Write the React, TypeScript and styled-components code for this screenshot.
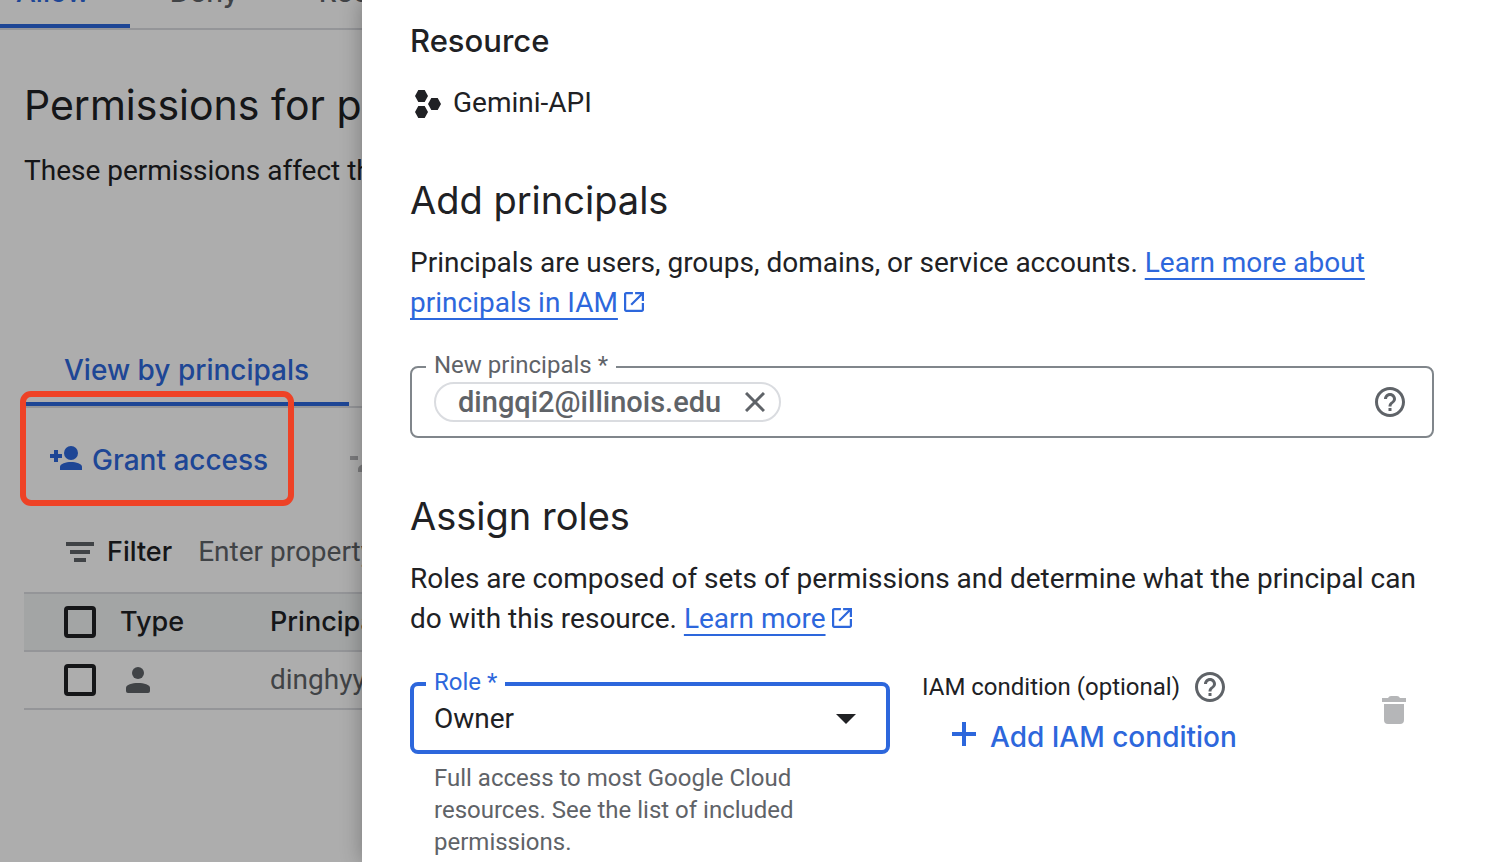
import React, { useState } from "react";
import styled, { createGlobalStyle, css } from "styled-components";

const color = {
  text: "#202124",
  muted: "#5f6368",
  blue: "#2d67dc",
  outline: "#80868b",
  divider: "#dadce0",
  disabled: "#b5b6b8",
  frame: "#ee4226",
};

const body = `Roboto, "Liberation Sans", sans-serif`;
const display = `Inter, Roboto, sans-serif`;

const GlobalStyle = createGlobalStyle`
  *, *::before, *::after { box-sizing: border-box; }
  body { margin: 0; background: #fff; color: ${color.text}; font: 400 28px/40px ${body}; }
  h1, h2, h3, p { margin: 0; }
  button, input, select { font: inherit; color: inherit; }
  svg { display: block; flex: none; }
`;

const Screen = styled.div`
  display: flex;
  min-height: 100vh;
`;

/* Page behind the drawer */

const Page = styled.main`
  position: relative;
  flex: 0 0 362px;
  padding-left: 24px;
  overflow: hidden;
  white-space: nowrap;
  background: #fff;
`;

const Scrim = styled.div`
  position: absolute;
  inset: 0;
  background: rgba(0, 0, 0, 0.32);
  pointer-events: none;
`;

const TabBar = styled.nav<{ $scrolled?: boolean }>`
  display: flex;
  width: max-content;
  min-width: 100%;
  border-bottom: 2px solid ${color.divider};
  ${(p) =>
    p.$scrolled &&
    css`
      margin: -28px 0 0 -48px;
    `}
`;

const Tab = styled.button<{ $active?: boolean }>`
  padding: 0 40px 12px;
  border: 0;
  border-bottom: 4px solid ${(p) => (p.$active ? color.blue : "transparent")};
  background: none;
  color: ${(p) => (p.$active ? color.blue : color.muted)};
  font-family: ${display};
  font-weight: 500;
`;

const PageTitle = styled.h1`
  margin-top: 47px;
  font: 400 41px/56px ${display};
`;

const PageText = styled.p`
  margin: 18px 0 159px;
`;

const Toolbar = styled.div`
  display: flex;
  align-items: center;
  gap: 82px;
  height: 104px;
  padding-left: 26px;
`;

const ToolButton = styled.button`
  display: flex;
  align-items: center;
  gap: 10px;
  padding: 0;
  border: 0;
  background: none;
  color: ${color.blue};
  font-family: ${display};
  font-weight: 500;

  &:disabled {
    color: ${color.disabled};
  }
`;

const Highlight = styled.div`
  position: absolute;
  top: 391px;
  left: 20px;
  width: 274px;
  height: 115px;
  border: 6px solid ${color.frame};
  border-radius: 11px;
  pointer-events: none;
`;

const FilterBar = styled.div`
  display: flex;
  align-items: center;
  height: 80px;
  padding-left: 42px;
  color: ${color.muted};
`;

const FilterLabel = styled.label`
  margin: 0 26px 0 13px;
  color: ${color.text};
  font-family: ${display};
  font-size: 27px;
  font-weight: 500;
`;

const FilterInput = styled.input`
  width: 440px;
  padding: 0;
  border: 0;
  outline: 0;
  background: none;

  &::placeholder {
    color: ${color.muted};
    opacity: 1;
  }
`;

const Table = styled.table`
  width: 640px;
  table-layout: fixed;
  border-collapse: separate;
  border-spacing: 0;
  border-top: 2px solid ${color.divider};

  th,
  td {
    height: 58px;
    padding: 0;
    border-bottom: 2px solid ${color.divider};
    text-align: left;
    color: ${color.muted};
  }
  th {
    background: #f1f3f4;
    color: ${color.text};
    font-family: ${display};
    font-size: 27px;
    font-weight: 500;
  }
`;

const CheckCol = styled.col`
  width: 96px;
`;
const TypeCol = styled.col`
  width: 150px;
`;

const Checkbox = styled.input`
  display: block;
  appearance: none;
  width: 32px;
  height: 32px;
  margin: 0 0 0 40px;
  border: 4px solid ${color.text};
  border-radius: 4px;
`;

const TypeIcon = styled.span`
  display: block;
  padding-left: 6px;
`;

/* Drawer */

const Drawer = styled.aside`
  position: relative;
  flex: 1;
  min-width: 0;
  padding: 21px 64px 4px 48px;
  background: #fff;
  box-shadow: 0 0 20px rgba(0, 0, 0, 0.3);
`;

const ResourceTitle = styled.h3`
  font: 500 31px/40px ${display};
`;

const ResourceName = styled.div`
  display: flex;
  align-items: center;
  gap: 12px;
  margin-top: 22px;
  padding-left: 5px;
`;

const SectionTitle = styled.h2`
  margin: 53px 0 19px;
  font: 400 38px/48px ${display};
`;

const Link = styled.a`
  color: ${color.blue};
  text-decoration: underline;
  text-decoration-thickness: 2px;
  text-underline-offset: 6px;
  text-decoration-skip-ink: none;
`;

const ExternalMark = styled.span`
  display: inline-block;
  margin-left: 6px;
  color: ${color.blue};
`;

const Outline = styled.fieldset<{ $focused?: boolean }>`
  min-width: 0;
  margin: 0;
  padding: ${(p) => (p.$focused ? "0 20px 11px" : "0 22px 14px")};
  border: ${(p) => (p.$focused ? `4px solid ${color.blue}` : `2px solid ${color.outline}`)};
  border-radius: 8px;
`;

const Legend = styled.legend<{ $focused?: boolean }>`
  margin-left: -8px;
  padding: 0 8px 4px;
  color: ${(p) => (p.$focused ? color.blue : color.muted)};
  font-size: 24px;
  line-height: 26px;
`;

const PrincipalsField = styled.div`
  margin: 29px 0 54px;
`;

const ChipRow = styled.div`
  display: flex;
  align-items: center;
  gap: 12px;
  height: 40px;
  padding-right: 5px;
`;

const Chip = styled.span`
  display: flex;
  align-items: center;
  gap: 24px;
  height: 40px;
  padding: 0 14px 0 22px;
  border: 2px solid ${color.divider};
  border-radius: 20px;
  color: ${color.muted};
  font-size: 29px;
  font-weight: 500;
`;

const ChipInput = styled.input`
  flex: 1;
  min-width: 0;
  height: 36px;
  padding: 0;
  border: 0;
  outline: 0;
  background: none;
`;

const IconButton = styled.button`
  display: flex;
  padding: 0;
  border: 0;
  background: none;
  color: ${color.muted};

  &:disabled {
    color: ${color.disabled};
  }
`;

const RoleRow = styled.div`
  display: flex;
  align-items: flex-start;
  margin-top: 30px;
`;

const RoleField = styled.div`
  flex: 0 0 480px;
`;

const SelectWrap = styled.div`
  display: grid;
  align-items: center;

  > * {
    grid-area: 1 / 1;
  }
  > svg {
    justify-self: end;
    margin-right: 10px;
    pointer-events: none;
  }
`;

const Select = styled.select`
  appearance: none;
  width: 100%;
  height: 40px;
  padding: 0;
  border: 0;
  outline: 0;
  background: none;
`;

const Hint = styled.p`
  padding: 8px 48px 0 24px;
  color: ${color.muted};
  font-size: 24px;
  line-height: 32px;
`;

const Condition = styled.div`
  flex: 1;
  margin-left: 32px;
`;

const ConditionLabel = styled.div`
  display: flex;
  align-items: center;
  gap: 15px;
  height: 36px;
  font-size: 24px;
`;

const AddButton = styled.button`
  display: flex;
  align-items: center;
  gap: 14px;
  margin: 12px 0 0 30px;
  padding: 0;
  border: 0;
  background: none;
  color: ${color.blue};
  font-family: ${display};
  font-weight: 500;
`;

const RemoveSlot = styled.div`
  padding: 27px 28px 0 0;
`;

const External = () => (
  <ExternalMark>
    <svg width="20" height="20" viewBox="3 3 18 18" fill="currentColor" aria-hidden="true">
      <path d="M19 19H5V5h6V3H5c-1.11 0-2 .9-2 2v14c0 1.1.89 2 2 2h14c1.1 0 2-.9 2-2v-6h-2v6zM13 3v2h4.59l-8.83 8.83 1.41 1.41L19 6.41V11h2V3h-8z" />
    </svg>
  </ExternalMark>
);

const HelpIcon = () => (
  <svg width="30" height="30" viewBox="2 2 20 20" fill="currentColor" aria-hidden="true">
    <path d="M11 18h2v-2h-2v2zm1-16C6.48 2 2 6.48 2 12s4.48 10 10 10 10-4.48 10-10S17.52 2 12 2zm0 18c-4.41 0-8-3.59-8-8s3.59-8 8-8 8 3.59 8 8-3.59 8-8 8zm0-14c-2.21 0-4 1.79-4 4h2c0-1.1.9-2 2-2s2 .9 2 2c0 2-3 1.75-3 5h2c0-2.25 3-2.5 3-5 0-2.21-1.79-4-4-4z" />
  </svg>
);

const PersonAddIcon = () => (
  <svg width="32" height="28" viewBox="0 0 32 28" fill="currentColor" aria-hidden="true">
    <path d="M4 4h4v4h4v4H8v4H4v-4H0V8h4z" />
    <circle cx="21" cy="7" r="7" />
    <path d="M10 24v-3c0-3.400 6-5 11-5s11 1.600 11 5v3z" />
  </svg>
);

const PersonRemoveIcon = () => (
  <svg width="32" height="24" viewBox="0 0 32 24" fill="currentColor" aria-hidden="true">
    <path d="M0 8h8v4H0z" />
    <circle cx="20" cy="7" r="7" />
    <path d="M8 24v-3c0-3 5-6 12-6s12 3 12 6v3z" />
  </svg>
);

const PersonIcon = () => (
  <svg width="24" height="26" viewBox="0 0 24 26" fill="currentColor" aria-hidden="true">
    <circle cx="12" cy="6" r="6" />
    <path d="M0 24v-3c0-3.500 6-5 12-5s12 1.500 12 5v3q0 2-2 2H2q-2 0-2-2z" />
  </svg>
);

const FilterIcon = () => (
  <svg width="28" height="20" viewBox="0 0 28 20" fill="currentColor" aria-hidden="true">
    <path d="M0 0h28v4H0zM4 8h20v4H4zM8 16h12v4H8z" />
  </svg>
);

const ProjectIcon = () => (
  <svg width="26" height="30" viewBox="0 -2 26 30" fill="currentColor" aria-hidden="true">
    <path d="M3.300 0h6.400L13 6l-3.300 6H3.300L0 6zM3.300 16h6.400L13 22l-3.300 6H3.300L0 22zM16.300 8h6.400L26 14l-3.300 6h-6.400L13 14z" />
  </svg>
);

const CloseIcon = () => (
  <svg width="20" height="20" viewBox="0 0 20 20" stroke="currentColor" strokeWidth="3" aria-hidden="true">
    <path d="M1 1l18 18M19 1L1 19" />
  </svg>
);

const ArrowIcon = () => (
  <svg width="20" height="10" viewBox="0 0 20 10" fill="currentColor" aria-hidden="true">
    <path d="M0 0h20L10 10z" />
  </svg>
);

const PlusIcon = () => (
  <svg width="24" height="30" viewBox="0 0 24 30" fill="currentColor" aria-hidden="true">
    <path d="M10 0h4v10h10v4H14v10h-4V14H0v-4h10z" />
  </svg>
);

const TrashIcon = () => (
  <svg width="24" height="28" viewBox="0 0 24 28" fill="currentColor" aria-hidden="true">
    <path d="M0 2h6q1-2 3-2h6q2 0 3 2h6v4H0zM2 8h20v16q0 4-4 4H6q-4 0-4-4z" />
  </svg>
);

export default function App() {
  const [role, setRole] = useState("Owner");

  return (
    <Screen>
      <GlobalStyle />
      <Page>
        <TabBar $scrolled>
          <Tab $active>Allow</Tab>
          <Tab>Deny</Tab>
          <Tab>Recommendations</Tab>
        </TabBar>
        <PageTitle>Permissions for project Gemini-API</PageTitle>
        <PageText>These permissions affect this project</PageText>
        <TabBar>
          <Tab $active>View by principals</Tab>
          <Tab>View by roles</Tab>
        </TabBar>
        <Toolbar>
          <ToolButton>
            <PersonAddIcon />
            Grant access
          </ToolButton>
          <ToolButton disabled>
            <PersonRemoveIcon />
            Remove access
          </ToolButton>
        </Toolbar>
        <FilterBar>
          <FilterIcon />
          <FilterLabel htmlFor="filter">Filter</FilterLabel>
          <FilterInput id="filter" placeholder="Enter property name or value" />
        </FilterBar>
        <Table>
          <colgroup>
            <CheckCol />
            <TypeCol />
            <col />
          </colgroup>
          <thead>
            <tr>
              <th>
                <Checkbox type="checkbox" aria-label="Select all" />
              </th>
              <th>Type</th>
              <th>Principal</th>
            </tr>
          </thead>
          <tbody>
            <tr>
              <td>
                <Checkbox type="checkbox" aria-label="Select row" />
              </td>
              <td>
                <TypeIcon>
                  <PersonIcon />
                </TypeIcon>
              </td>
              <td>dinghyy</td>
            </tr>
          </tbody>
        </Table>
        <Scrim />
        <Highlight />
      </Page>

      <Drawer>
        <ResourceTitle>Resource</ResourceTitle>
        <ResourceName>
          <ProjectIcon />
          Gemini-API
        </ResourceName>

        <SectionTitle>Add principals</SectionTitle>
        <p>
          Principals are users, groups, domains, or service accounts.{" "}
          <Link href="#principals">Learn more about principals in IAM</Link>
          <External />
        </p>
        <PrincipalsField>
          <Outline>
            <Legend>
              <label htmlFor="principals">New principals *</label>
            </Legend>
            <ChipRow>
              <Chip>
                dingqi2@illinois.edu
                <IconButton aria-label="Remove dingqi2@illinois.edu">
                  <CloseIcon />
                </IconButton>
              </Chip>
              <ChipInput id="principals" />
              <IconButton aria-label="Help with principals">
                <HelpIcon />
              </IconButton>
            </ChipRow>
          </Outline>
        </PrincipalsField>

        <SectionTitle>Assign roles</SectionTitle>
        <p>
          Roles are composed of sets of permissions and determine what the principal can do with
          this resource. <Link href="#roles">Learn more</Link>
          <External />
        </p>
        <RoleRow>
          <RoleField>
            <Outline $focused>
              <Legend $focused>
                <label htmlFor="role">Role *</label>
              </Legend>
              <SelectWrap>
                <Select id="role" value={role} onChange={(e) => setRole(e.target.value)}>
                  <option>Owner</option>
                  <option>Editor</option>
                  <option>Viewer</option>
                </Select>
                <ArrowIcon />
              </SelectWrap>
            </Outline>
            <Hint>
              Full access to most Google Cloud resources. See the list of included permissions.
            </Hint>
          </RoleField>
          <Condition>
            <ConditionLabel>
              IAM condition (optional)
              <IconButton aria-label="Help with IAM condition">
                <HelpIcon />
              </IconButton>
            </ConditionLabel>
            <AddButton>
              <PlusIcon />
              Add IAM condition
            </AddButton>
          </Condition>
          <RemoveSlot>
            <IconButton disabled aria-label="Delete role">
              <TrashIcon />
            </IconButton>
          </RemoveSlot>
        </RoleRow>
      </Drawer>
    </Screen>
  );
}
